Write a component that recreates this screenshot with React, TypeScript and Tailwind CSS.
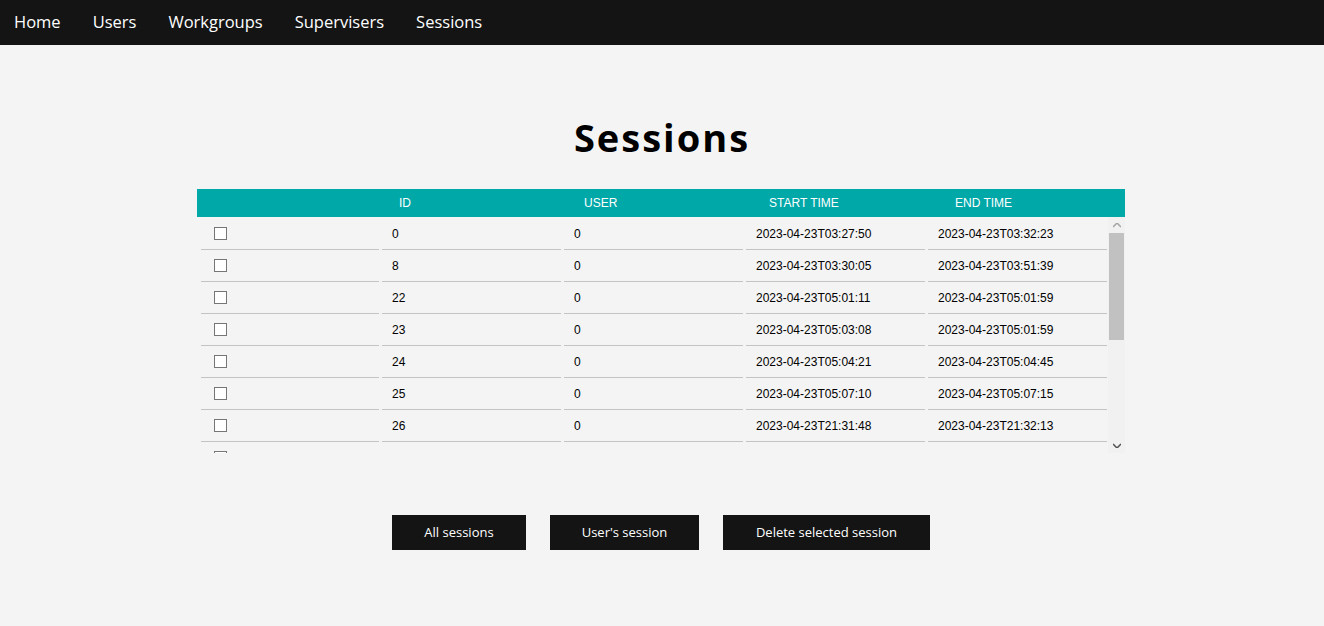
import React from 'react';

interface Session {
  id: number;
  user: number;
  start: string;
  end: string;
}

const sessions: Session[] = [
  { id: 0, user: 0, start: '2023-04-23T03:27:50', end: '2023-04-23T03:32:23' },
  { id: 8, user: 0, start: '2023-04-23T03:30:05', end: '2023-04-23T03:51:39' },
  { id: 22, user: 0, start: '2023-04-23T05:01:11', end: '2023-04-23T05:01:59' },
  { id: 23, user: 0, start: '2023-04-23T05:03:08', end: '2023-04-23T05:01:59' },
  { id: 24, user: 0, start: '2023-04-23T05:04:21', end: '2023-04-23T05:04:45' },
  { id: 25, user: 0, start: '2023-04-23T05:07:10', end: '2023-04-23T05:07:15' },
  { id: 26, user: 0, start: '2023-04-23T21:31:48', end: '2023-04-23T21:32:13' },
  { id: 27, user: 0, start: '2023-04-23T22:34:08', end: '2023-04-24T03:58:15' },
];

const navLinks = ['Home', 'Users', 'Workgroups', 'Supervisers', 'Sessions'];

const Cell: React.FC<{ children?: React.ReactNode; first?: boolean }> = ({ children, first }) => (
  <div
    className={`flex h-[32px] shrink-0 items-center border-b border-[#c4c4c4] ${first ? 'w-[178px] pl-[13px]' : 'w-[179px] pl-[10px]'}`}
  >
    {children}
  </div>
);

const App: React.FC = () => {
  return (
    <div className="min-h-[626px] bg-[#f4f4f4] font-['Open_Sans','Noto_Sans',sans-serif]">
      {/* Top navigation */}
      <nav className="flex h-[45px] items-center gap-[32px] bg-[#141414] px-[14px] text-[16.5px] text-white">
        {navLinks.map((link) => (
          <a key={link} href="#" className="leading-none">
            {link}
          </a>
        ))}
      </nav>

      <h1 className="mt-[68px] text-center text-[38px] font-bold leading-[48px] tracking-[2px] text-black">
        Sessions
      </h1>

      {/* Sessions table */}
      <div className="mx-auto mt-[28px] w-[928px] -translate-x-[1px] font-['Liberation_Sans',Arial,sans-serif] text-[12px]">
        <div className="flex h-[28px] items-center bg-[#00a8a8] text-white">
          <div className="w-[202px]" />
          <div className="w-[185px]">ID</div>
          <div className="w-[185px]">USER</div>
          <div className="w-[186px]">START TIME</div>
          <div>END TIME</div>
        </div>

        <div className="flex h-[236px] overflow-hidden">
          <div className="flex flex-1 flex-col pl-[4px] pt-[1px] text-black">
            {sessions.map((s) => (
              <div key={s.id} className="flex gap-[3px]">
                <Cell first>
                  <span className="block h-[13px] w-[13px] border border-[#767676] bg-white" />
                </Cell>
                <Cell>{s.id}</Cell>
                <Cell>{s.user}</Cell>
                <Cell>{s.start}</Cell>
                <Cell>{s.end}</Cell>
              </div>
            ))}
          </div>

          {/* Scrollbar */}
          <div className="flex w-[17px] shrink-0 flex-col bg-[#f1f1f1]">
            <div className="flex h-[16px] items-center justify-center text-[#a3a3a3]">
              <svg width="8" height="5" viewBox="0 0 8 5">
                <path d="M0 4 L4 0 L8 4" fill="none" stroke="currentColor" strokeWidth="1.5" />
              </svg>
            </div>
            <div className="mx-[1px] h-[107px] bg-[#c1c1c1]" />
            <div className="flex-1" />
            <div className="flex h-[16px] items-center justify-center text-[#505050]">
              <svg width="8" height="5" viewBox="0 0 8 5">
                <path d="M0 1 L4 5 L8 1" fill="none" stroke="currentColor" strokeWidth="1.5" />
              </svg>
            </div>
          </div>
        </div>
      </div>

      {/* Actions */}
      <div className="mt-[62px] flex -translate-x-[1px] justify-center gap-[24px] text-[13px] text-white">
        <button className="h-[35px] w-[134px] bg-[#141414]">All sessions</button>
        <button className="h-[35px] w-[149px] bg-[#141414]">User's session</button>
        <button className="h-[35px] w-[207px] bg-[#141414]">Delete selected session</button>
      </div>
    </div>
  );
};

export default App;
